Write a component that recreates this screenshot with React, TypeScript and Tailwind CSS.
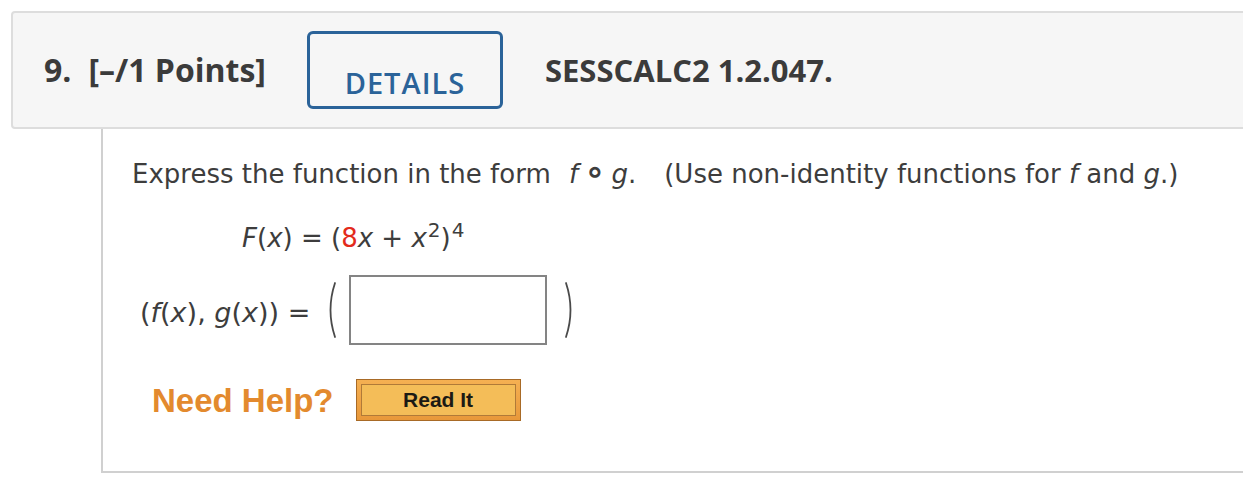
import React from 'react';

const body = { fontFamily: '"DejaVu Sans", Verdana, sans-serif' };
const head = { fontFamily: '"Open Sans", "Liberation Sans", sans-serif' };
const arial = { fontFamily: '"Liberation Sans", Arial, sans-serif' };

function Paren({ right = false }: { right?: boolean }) {
  return (
    <svg width="12" height="58" viewBox="0 0 12 58" className="shrink-0">
      <path
        d={right ? 'M2 2 Q11 29 2 56' : 'M10 2 Q1 29 10 56'}
        fill="none"
        stroke="#4a4a4a"
        strokeWidth="1.8"
        strokeLinecap="round"
      />
    </svg>
  );
}

export default function App() {
  return (
    <div className="w-[1243px] h-[478px] overflow-hidden bg-white">
      <div className="w-[1300px] pt-[11px] pl-[11px]">
        {/* question header */}
        <div
          className="h-[118px] flex items-center pl-[31px] bg-[#f6f6f6] border-2 border-[#dddddd] rounded-[4px] text-[#3b3b3b]"
          style={head}
        >
          <span className="text-[32px] font-bold mr-[17px]">9.</span>
          <span className="text-[32px] font-bold">[–/1 Points]</span>
          <div className="ml-[41px] w-[196px] h-[78px] border-[3px] border-[#2b6399] rounded-[6px] flex items-center justify-center pt-[26px]">
            <span className="text-[29px] font-semibold tracking-[1px] text-[#2b6399]">DETAILS</span>
          </div>
          <span className="ml-[42px] text-[31px] font-bold">SESSCALC2 1.2.047.</span>
        </div>

        {/* question body */}
        <div
          className="ml-[90px] border-l-2 border-b-2 border-[#d0d0d0] pt-[29px] pl-[29px] pb-[50px] text-[#3d3d3d] text-[26px] leading-[32px]"
          style={body}
        >
          <p className="whitespace-nowrap">
            Express the function in the form <span className="ml-[10px] italic">f</span>
            <span className="mx-[6px] text-[34px] leading-[0] font-bold">∘</span>
            <span className="italic">g</span>.
            <span className="ml-[28px]">(Use non-identity functions for </span>
            <span className="italic">f</span> and <span className="italic">g</span>.)
          </p>

          <p className="mt-[32px] ml-[110px] whitespace-nowrap">
            <span className="italic">F</span>(<span className="italic">x</span>) = (
            <span className="text-[#e32b1c]">8</span>
            <span className="italic">x</span> + <span className="italic">x</span>
            <sup className="text-[20px] ml-[1px]">2</sup>)<sup className="text-[20px] ml-[1px]">4</sup>
          </p>

          <div className="mt-[21px] ml-[8px] flex items-center">
            <span className="whitespace-nowrap pt-[6px] text-[27px]">
              (<span className="italic">f</span>(<span className="italic">x</span>),{' '}
              <span className="italic">g</span>(<span className="italic">x</span>)) =
            </span>
            <div className="ml-[15px]">
              <Paren />
            </div>
            <input
              type="text"
              className="ml-[12px] w-[198px] h-[70px] border-2 border-[#848484] bg-white outline-none"
            />
            <div className="ml-[17px]">
              <Paren right />
            </div>
          </div>

          <div className="mt-[34px] ml-[20px] flex items-center" style={arial}>
            <span className="text-[33px] font-bold text-[#e38a2e] leading-none">Need Help?</span>
            <button className="ml-[22px] w-[165px] h-[42px] p-[4px] border border-[#a86a26] bg-gradient-to-b from-[#f5b052] to-[#e8983a] flex">
              <span className="flex-1 flex items-center justify-center border border-[#b07a38] bg-[#f4bd58] text-[21px] font-bold text-[#1c1a14]">
                Read It
              </span>
            </button>
          </div>
        </div>
      </div>
    </div>
  );
}
